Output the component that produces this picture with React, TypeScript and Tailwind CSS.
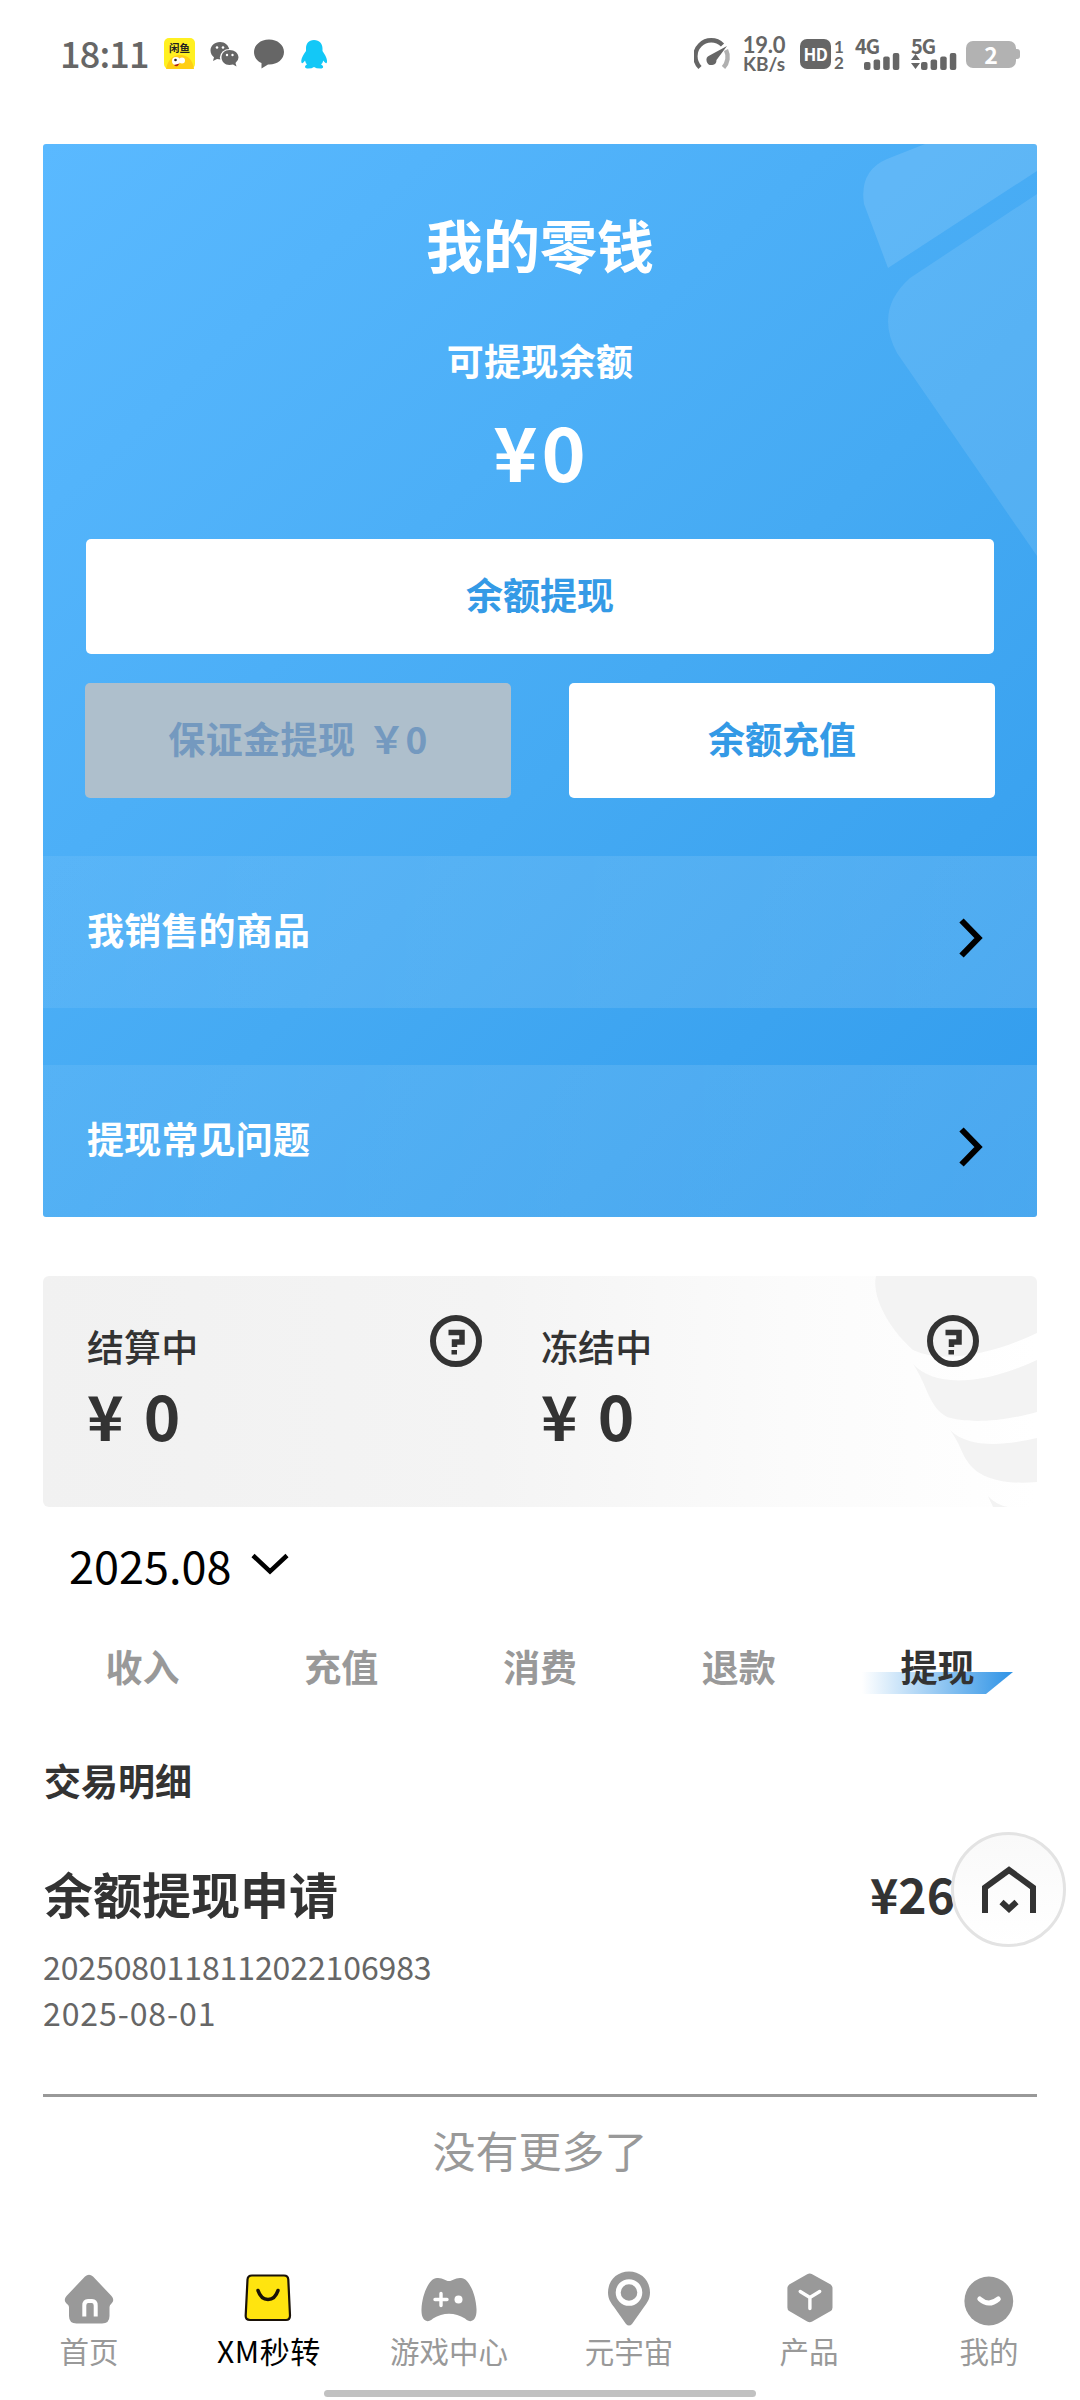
import type { ReactNode } from 'react';

interface TabItem {
  label: string;
  active?: boolean;
}

interface NavItem {
  label: string;
  icon: ReactNode;
  active?: boolean;
}

const tabs: TabItem[] = [
  { label: '收入' },
  { label: '充值' },
  { label: '消费' },
  { label: '退款' },
  { label: '提现', active: true },
];

const navItems: NavItem[] = [
  {
    label: '首页',
    icon: (
      <svg width="60" height="60" viewBox="0 0 60 60">
        <path
          d="M26 6.500Q30 3 34 6.500L52.500 26Q56 30 52.500 33.500Q50.500 35 50.500 37V46Q50.500 53.500 43 53.500H17.500Q10 53.500 10 46V37Q10 35 7.500 33.500Q4 30 7.500 26Z"
          fill="#999"
        />
        <path d="M25.300 46.500V35.500Q25.300 31 29 31H33Q36.700 31 36.700 35.500V46.500" fill="none" stroke="#fff" strokeWidth="4" />
      </svg>
    ),
  },
  {
    label: 'XM秒转',
    active: true,
    icon: (
      <svg width="60" height="60" viewBox="0 0 60 60">
        <path
          d="M13 5.500H45Q49 5.500 49.300 9.500L51 45.500Q51 50 47 50H11Q6.500 50 6.700 45.500L8.500 9.500Q8.800 5.500 13 5.500Z"
          fill="#ffe40f"
          stroke="#1a1208"
          strokeWidth="2.200"
        />
        <path d="M19 20.500Q22 29.500 29 29.500Q36 29.500 39 20.500" fill="none" stroke="#1a1208" strokeWidth="3.600" strokeLinecap="round" />
      </svg>
    ),
  },
  {
    label: '游戏中心',
    icon: (
      <svg width="60" height="60" viewBox="0 0 60 60">
        <path
          d="M30 11C34 11 36 7.500 42 8C50 8 57 25 57.500 39C58 51 52 54 46 48.500C36 42 24 42 14 48.500C8 54 2 51 2.500 39C3 25 10 8 18 8C24 7.500 26 11 30 11Z"
          fill="#999"
        />
        <path d="M22 23.500V35.500M16 29.500H28" stroke="#fff" strokeWidth="3.400" strokeLinecap="round" />
        <circle cx="39.500" cy="29.500" r="4" fill="#fff" />
      </svg>
    ),
  },
  {
    label: '元宇宙',
    icon: (
      <svg width="60" height="60" viewBox="0 0 60 60">
        <path d="M30 1.500C42 1.500 51 10.500 51 22.500C51 29 48 33 45 37L33 54Q30 57 27 54L15 37C12 33 9 29 9 22.500C9 10.500 18 1.500 30 1.500Z" fill="#999" />
        <circle cx="30" cy="22.500" r="10.800" fill="#999" stroke="#fff" strokeWidth="5" />
      </svg>
    ),
  },
  {
    label: '产品',
    icon: (
      <svg width="60" height="60" viewBox="0 0 60 60">
        <path
          d="M28.200 4.200Q30.700 2.800 33.200 4.200L51.700 14.500Q53.500 16 53.500 18V37.500Q53.500 40 51.700 41L33.200 51.500Q30.700 52.800 28.200 51.500L10.200 41Q8.400 40 8.400 37.500V18Q8.400 16 10.200 14.500Z"
          fill="#999"
        />
        <path d="M21.200 21.500L30.900 27.500L40.700 21.500M30.900 27.500V38.500" fill="none" stroke="#fff" strokeWidth="3.400" strokeLinecap="round" />
      </svg>
    ),
  },
  {
    label: '我的',
    icon: (
      <svg width="60" height="60" viewBox="0 0 60 60">
        <circle cx="29.800" cy="31" r="24.400" fill="#999" />
        <path d="M20.800 29Q29.800 37 39.300 29" fill="none" stroke="#fff" strokeWidth="5" strokeLinecap="round" />
      </svg>
    ),
  },
];

function SignalBars() {
  return (
    <svg width="36" height="17" viewBox="0 0 36 17">
      <rect x="0" y="9" width="6.500" height="8" rx="2" fill="#666" />
      <rect x="9.600" y="6.500" width="6.500" height="10.500" rx="2" fill="#666" />
      <rect x="19.200" y="3.500" width="6.500" height="13.500" rx="2" fill="#666" />
      <rect x="28.800" y="0" width="6.500" height="17" rx="2" fill="#666" />
    </svg>
  );
}

function StatusBar() {
  return (
    <header className="flex h-[108px] items-center pl-[60px] pr-[60px] text-[#666]">
      <span className="-mt-[4px] w-[104px] text-[36px] font-medium leading-none tracking-[-0.8px]">18:11</span>
      <svg className="shrink-0" width="32" height="32" viewBox="0 0 32 32">
        <rect width="31" height="31" rx="5" fill="#fff021" />
        <path d="M2 31Q5 17 16 17Q28 17 30 31Z" fill="#ffcf14" />
        <circle cx="12" cy="23" r="4" fill="#fff" />
        <circle cx="18" cy="22.500" r="3" fill="#fff" />
        <circle cx="11.500" cy="22" r="1.300" fill="#222" />
        <path d="M10 27Q13 30 15.500 25.500Z" fill="#b3210f" />
        <text x="5" y="13.500" fontSize="10.500" fontWeight="700" fill="#222">闲鱼</text>
      </svg>
      <svg className="ml-[14px] shrink-0" width="30" height="30" viewBox="0 0 30 30">
        <path d="M10 3C4.500 3 .5 7 .5 11.500C.5 14.500 2 16.700 4 18.200L3 22L7 20Q12 21 14 19.500C20 19 20 12 19.500 11C18.500 6 15 3 10 3Z" fill="#666" />
        <ellipse cx="19.500" cy="18.500" rx="9.600" ry="8.500" fill="#fff" />
        <path d="M19.500 11C14.500 11 11.500 14.500 11.500 18.500C11.500 22.500 15 26 19.500 26L23 25.500L26.500 27.500L25.500 24Q28.500 21.500 28.500 18.500C28.500 14 24.500 11 19.500 11Z" fill="#666" />
        <g fill="#fff">
          <circle cx="7" cy="8.500" r="1.300" />
          <circle cx="13" cy="8.500" r="1.300" />
          <circle cx="17" cy="16" r="1.200" />
          <circle cx="22.500" cy="16" r="1.200" />
        </g>
      </svg>
      <svg className="ml-[14px] shrink-0" width="31" height="30" viewBox="0 0 31 30">
        <path d="M15 .5C6.500 .5 0 6 0 13C0 18 3 22 7.500 24V29.500L14 25.500C23 26 30 20.500 30 13C30 6 23.500 .5 15 .5Z" fill="#666" />
      </svg>
      <svg className="ml-[16px] shrink-0" width="27" height="29" viewBox="0 0 27 29">
        <path
          d="M13 0C7.500 0 5 4 5 8.500V11C3 14 .5 17.500 .3 20.500C.2 24 1.500 24 4 20.500Q4.500 23 6 24.500C3 26 3.500 28.500 7 28.500Q11 28.500 13 27Q15 28.500 19.500 28.500C23 28.500 23 26 20 24.500Q21.800 23 22.300 20.500C24.800 24 26.300 24 26 20.500C25.700 17 23.300 14 21.500 11V8.500C21.500 4 18.500 0 13 0Z"
          fill="#13c8f7"
        />
      </svg>

      <svg className="ml-auto shrink-0" width="38" height="32" viewBox="0 0 38 32">
        <path d="M6 29.500A15.700 15.700 0 0 1 28.500 7" fill="none" stroke="#666" strokeWidth="4.500" />
        <path d="M32 12A15.500 15.500 0 0 1 29.500 29.500" fill="none" stroke="#b0b0b0" strokeWidth="4.500" />
        <path d="M33 8L22.500 22A5 5 0 1 1 15.500 17.500Z" fill="#666" />
      </svg>
      <div className="ml-[9px] flex w-[46px] flex-col items-center font-['Lato',sans-serif] font-bold">
        <span className="text-[22px] leading-[18px] tracking-[-0.3px]">19.0</span>
        <span className="text-[19px] leading-[19px]">KB/s</span>
      </div>
      <div className="ml-[13px] flex h-[30px] w-[31px] items-center justify-center rounded-[7px] bg-[#666] text-[17px] font-bold tracking-[-0.5px] text-white">
        HD
      </div>
      <div className="ml-[2px] flex w-[12px] flex-col items-center gap-px font-['Lato',sans-serif] font-bold">
        <span className="text-[17px] leading-[15px]">1</span>
        <span className="text-[17px] leading-[15px]">2</span>
      </div>
      <div className="ml-[10px] flex h-[32px] w-[46px] flex-col">
        <span className="h-[15px] text-[20px] font-bold leading-[15px] tracking-[-1px]">4G</span>
        <span className="ml-[9px]">
          <SignalBars />
        </span>
      </div>
      <div className="ml-[10px] flex h-[32px] w-[46px] flex-col">
        <span className="h-[15px] text-[20px] font-bold leading-[15px] tracking-[-1px]">5G</span>
        <span className="flex">
          <svg width="10" height="17" viewBox="0 0 10 17">
            <path d="M4.500 1L9 7H0ZM4.500 16L0 10H9Z" fill="#666" />
          </svg>
          <SignalBars />
        </span>
      </div>
      <div className="ml-[9px] flex items-center">
        <div className="flex h-[27px] w-[50px] items-center justify-center rounded-[7px] bg-[#b2b2b2] text-[23px] font-bold leading-none text-white">
          2
        </div>
        <div className="h-[10px] w-[4px] rounded-r-[3px] bg-[#b2b2b2]" />
      </div>
    </header>
  );
}

function LinkRow({ label }: { label: string }) {
  return (
    <div className="relative flex h-full items-center justify-between bg-linear-to-r from-white/7 to-white/12 pl-[44px] pr-[52px] text-[37px] font-bold tracking-[0.2px] text-white">
      <span className="-mt-[5px]">{label}</span>
      <svg className="mt-[12px]" width="28" height="44" viewBox="0 0 28 44">
        <path d="M4.500 4.500L21.500 22L4.500 39.500" fill="none" stroke="#000" strokeWidth="6" />
      </svg>
    </div>
  );
}

function WalletCard() {
  return (
    <section className="relative mx-[43px] mt-[36px] flex h-[1073px] flex-col overflow-hidden rounded-[3px] bg-[linear-gradient(137deg,#5ab9ff_0%,#45aaf3_55%,#319ced_100%)] text-white">
      <svg className="absolute right-0 top-0" width="194" height="420" viewBox="800 0 194 420">
        <path d="M882 0L844 15Q816 27 821 60L845 124L994 27V0Z" fill="#fff" fillOpacity="0.120" />
        <path d="M994 50L867 134Q831 166 854 209L994 412Z" fill="#fff" fillOpacity="0.100" />
      </svg>
      <div className="relative flex flex-col items-center">
        <h1 className="mt-[65px] h-[68px] text-[57px] font-bold leading-[68px]">我的零钱</h1>
        <p className="mt-[60px] h-[46px] text-[37px] font-bold leading-[46px] tracking-[0.3px]">可提现余额</p>
        <p className="mt-[27px] h-[80px] pl-[3px] text-[75px] font-bold leading-[80px] tracking-[4px]">¥0</p>
      </div>
      <div className="relative mt-[49px] px-[43px]">
        <button className="flex h-[115px] w-full items-center justify-center rounded-[5px] bg-white pb-[4px] text-[37px] font-bold text-[#349ae6]">
          余额提现
        </button>
        <div className="-mx-px mt-[29px] flex justify-between">
          <button className="h-[115px] w-[426px] rounded-[5px] bg-[#aebfcc] pb-[4px] text-[37px] font-bold tracking-[0.4px] text-[#7499bf] [word-spacing:4px]">
            保证金提现 ￥0
          </button>
          <button className="h-[115px] w-[426px] rounded-[5px] bg-white pb-[4px] text-[37px] font-bold text-[#349ae6]">余额充值</button>
        </div>
      </div>
      <div className="mt-[58px] h-[153px]">
        <LinkRow label="我销售的商品" />
      </div>
      <div className="mt-[57px] h-[153px]">
        <LinkRow label="提现常见问题" />
      </div>
    </section>
  );
}

function HelpIcon() {
  return (
    <svg width="52" height="52" viewBox="0 0 52 52">
      <circle cx="26" cy="26" r="23" fill="none" stroke="#333" strokeWidth="6" />
      <path d="M18.500 17.500H32V27H24.500V32" fill="none" stroke="#333" strokeWidth="5.500" />
      <rect x="21.500" y="35" width="5.500" height="4.500" fill="#333" />
    </svg>
  );
}

function Balance({ label }: { label: string }) {
  return (
    <div>
      <p className="text-[37px] font-medium leading-[46px] tracking-[0.1px]">{label}</p>
      <p className="mt-[12px] text-[62px] font-bold leading-[66px] [word-spacing:6px]">¥ 0</p>
    </div>
  );
}

function PendingCard() {
  return (
    <section className="relative mx-[43px] mt-[59px] flex h-[231px] overflow-hidden rounded-[6px] bg-[linear-gradient(90deg,#f1f1f1,#f4f4f4_45%,#fbfbfb_75%,#fff)]">
      <svg className="absolute right-0 top-0" width="174" height="231" viewBox="820 0 174 231">
        <g fill="#f3f3f3">
          <path d="M833 0C828 22 848 55 870 74C900 88 950 78 994 57V0Z" />
          <path d="M870 88C890 110 935 111 994 84V136C950 148 920 146 904 141C885 130 885 110 870 88Z" />
          <path d="M907 154C925 172 960 170 994 162V206C960 209 940 202 930 192C918 180 920 172 907 154Z" />
          <path d="M945 220Q953 229 965 231H950Z" />
        </g>
      </svg>
      <div className="relative flex w-[498px] justify-between pl-[44px] pr-[59px] pt-[47px]">
        <Balance label="结算中" />
        <div className="-mt-[8px]">
          <HelpIcon />
        </div>
      </div>
      <div className="relative flex w-[496px] justify-between pr-[58px] pt-[47px]">
        <Balance label="冻结中" />
        <div className="-mt-[8px]">
          <HelpIcon />
        </div>
      </div>
    </section>
  );
}

function Tabs() {
  return (
    <div className="mx-[43px] mt-[46px] grid h-[56px] grid-cols-5 text-center text-[37px] font-bold leading-[56px]">
      {tabs.map((tab) =>
        tab.active ? (
          <div key={tab.label} className="relative text-[#333]">
            <svg className="absolute left-[24px] top-[34px]" width="152" height="22" viewBox="0 0 152 22">
              <defs>
                <linearGradient id="tabGlow">
                  <stop offset="0" stopColor="#2e93e6" stopOpacity="0" />
                  <stop offset="1" stopColor="#2e93e6" />
                </linearGradient>
              </defs>
              <path d="M0 0H151L124 22H0Z" fill="url(#tabGlow)" />
            </svg>
            <span className="relative">{tab.label}</span>
          </div>
        ) : (
          <div key={tab.label} className="text-[#999]">
            {tab.label}
          </div>
        )
      )}
    </div>
  );
}

function Transaction() {
  return (
    <div className="relative mx-[43px] mt-[58px] border-b-[3px] border-[#999] pb-[59px]">
      <div className="flex h-[60px] items-center justify-between text-[49px] font-bold leading-[60px] text-[#333]">
        <span className="pl-px">余额提现申请</span>
        <span className="w-[167px] text-[48px]">¥26</span>
      </div>
      <div className="mt-[20px] text-[32px] leading-[46px] text-[#666]">
        <p className="tracking-[-0.1px]">2025080118112022106983</p>
        <p className="tracking-[0.9px]">2025-08-01</p>
      </div>
      <div className="absolute -right-[29px] -top-[31px] flex size-[115px] items-center justify-center rounded-full border-[3px] border-[#e3e3e3] bg-linear-to-b from-[#f9f9f9] to-white">
        <svg width="60" height="52" viewBox="0 0 60 52">
          <path d="M6 49V23.500L30 6L54 23.500V49" fill="none" stroke="#333" strokeWidth="6" />
          <path d="M22.500 38L30 45L37.500 38" fill="none" stroke="#333" strokeWidth="6" />
        </svg>
      </div>
    </div>
  );
}

function BottomNav() {
  return (
    <nav className="-ml-px grid h-[120px] w-full grid-cols-6">
      {navItems.map((item) => (
        <div key={item.label} className="flex flex-col items-center">
          {item.icon}
          <span
            className={
              item.active
                ? 'mt-[2px] text-[30px] leading-[36px] tracking-[0.6px] text-black'
                : 'mt-[2px] text-[29.5px] leading-[36px] text-[#999]'
            }
          >
            {item.label}
          </span>
        </div>
      ))}
    </nav>
  );
}

export default function App() {
  return (
    <main className="flex h-[2400px] w-[1080px] flex-col overflow-hidden bg-white font-['Noto_Sans_CJK_SC',sans-serif] text-[#333]">
      <StatusBar />
      <WalletCard />
      <PendingCard />
      <div className="mt-[31px] flex h-[54px] items-center pl-[69px] text-[45px] leading-[54px] text-black">
        <span>2025.08</span>
        <svg className="ml-[19px]" width="40" height="24" viewBox="0 0 40 24">
          <path d="M3 2.500L20 18.500L37 2.500" fill="none" stroke="#000" strokeWidth="4.500" />
        </svg>
      </div>
      <Tabs />
      <h2 className="mt-[61px] h-[50px] pl-[44px] text-[37px] font-bold leading-[50px]">交易明细</h2>
      <Transaction />
      <p className="mt-[22px] text-center text-[43px] leading-[60px] text-[#999]">没有更多了</p>
      <div className="mt-auto">
        <BottomNav />
        <div className="mx-auto mb-[3px] h-[7px] w-[432px] rounded-full bg-[#c1c1c1]" />
      </div>
    </main>
  );
}
